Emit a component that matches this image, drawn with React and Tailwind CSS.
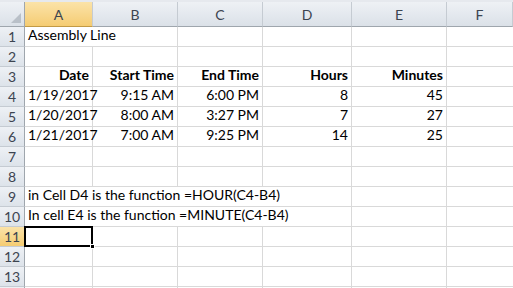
import React from 'react';

const font = { fontFamily: 'Lato, "Open Sans", sans-serif' };

function Hdr({ children, sel, last }) {
    return (
        <div
            className={`h-[25px] flex items-center justify-center border-b border-[#9fa6ad] ${last ? '' : 'border-r border-r-[#c5cbd2]'} text-[14px] text-[#3c4450] ${sel ? 'bg-gradient-to-b from-[#fbe3a8] to-[#f5cc72] border-b-[#c29a45]' : 'bg-gradient-to-b from-[#eef1f5] to-[#dbe1e8]'}`}
        >
            {children}
        </div>
    );
}

function RowHdr({ n, sel }) {
    return (
        <div
            className={`h-[20px] flex items-center justify-center border-b border-r border-b-[#c5cbd2] border-r-[#9fa6ad] text-[14px] text-[#3c4450] ${sel ? 'bg-gradient-to-b from-[#fbe3a8] to-[#f5cc72]' : 'bg-gradient-to-b from-[#eef1f5] to-[#dde3ea]'}`}
        >
            {n}
        </div>
    );
}

function Cell({ children, right, bold, span, last }) {
    return (
        <div
            className={`h-[20px] flex items-end pb-[1px] px-[3px] border-b border-[#d9d9d9] ${last ? '' : 'border-r'} whitespace-nowrap overflow-visible text-[14px] text-black ${right ? 'justify-end' : 'justify-start'} ${bold ? 'font-bold' : ''} ${span || ''}`}
        >
            {children}
        </div>
    );
}

const rows = [
    { n: 1, cells: [{ t: 'Assembly Line', span: 'col-span-2' }, {}, {}, {}, {}] },
    { n: 2, cells: [{}, {}, {}, {}, {}, {}] },
    {
        n: 3,
        cells: [
            { t: 'Date', r: 1, b: 1 },
            { t: 'Start Time', r: 1, b: 1 },
            { t: 'End Time', r: 1, b: 1 },
            { t: 'Hours', r: 1, b: 1 },
            { t: 'Minutes', r: 1, b: 1 },
            {},
        ],
    },
    { n: 4, cells: [{ t: '1/19/2017' }, { t: '9:15 AM', r: 1 }, { t: '6:00 PM', r: 1 }, { t: '8', r: 1 }, { t: '45', r: 1 }, {}] },
    { n: 5, cells: [{ t: '1/20/2017' }, { t: '8:00 AM', r: 1 }, { t: '3:27 PM', r: 1 }, { t: '7', r: 1 }, { t: '27', r: 1 }, {}] },
    { n: 6, cells: [{ t: '1/21/2017' }, { t: '7:00 AM', r: 1 }, { t: '9:25 PM', r: 1 }, { t: '14', r: 1 }, { t: '25', r: 1 }, {}] },
    { n: 7, cells: [{}, {}, {}, {}, {}, {}] },
    { n: 8, cells: [{}, {}, {}, {}, {}, {}] },
    { n: 9, cells: [{ t: 'in Cell D4 is the function =HOUR(C4-B4)', span: 'col-span-4' }, {}, {}] },
    { n: 10, cells: [{ t: 'In cell E4 is the function =MINUTE(C4-B4)', span: 'col-span-4' }, {}, {}] },
    { n: 11, sel: true, cells: [{ active: 1 }, {}, {}, {}, {}, {}] },
    { n: 12, cells: [{}, {}, {}, {}, {}, {}] },
    { n: 13, cells: [{}, {}, {}, {}, {}, {}] },
    { n: '', cells: [{}, {}, {}, {}, {}, {}] },
];

export default function App() {
    return (
        <div className="w-[513px] h-[288px] overflow-hidden bg-white" style={font}>
            <div className="grid grid-cols-[25px_68px_85px_85px_89px_95px_66px] border-t-[2px] border-[#e6e9ee]">
                {/* corner */}
                <div className="h-[25px] relative border-b border-r border-[#9fa6ad] bg-gradient-to-b from-[#eef1f5] to-[#dbe1e8]">
                    <div className="absolute right-[3px] bottom-[3px] w-0 h-0 border-l-[10px] border-l-transparent border-b-[10px] border-b-[#b9c0c8]" />
                </div>
                <Hdr sel>A</Hdr>
                <Hdr>B</Hdr>
                <Hdr>C</Hdr>
                <Hdr>D</Hdr>
                <Hdr>E</Hdr>
                <Hdr>F</Hdr>

                {rows.map((row, ri) => (
                    <React.Fragment key={ri}>
                        <RowHdr n={row.n} sel={row.sel} />
                        {row.cells.map((c, i) =>
                            c.active ? (
                                <div key={i} className="h-[20px] relative border-b border-r border-[#d9d9d9]">
                                    <div className="absolute -left-[1px] -top-[1px] w-[69px] h-[21px] border-2 border-black" />
                                    <div className="absolute -right-[3px] -bottom-[3px] w-[5px] h-[5px] bg-black border border-white" />
                                </div>
                            ) : (
                                <Cell key={i} right={c.r} bold={c.b} span={c.span} last={i === row.cells.length - 1}>
                                    {c.t}
                                </Cell>
                            )
                        )}
                    </React.Fragment>
                ))}
            </div>
        </div>
    );
}
